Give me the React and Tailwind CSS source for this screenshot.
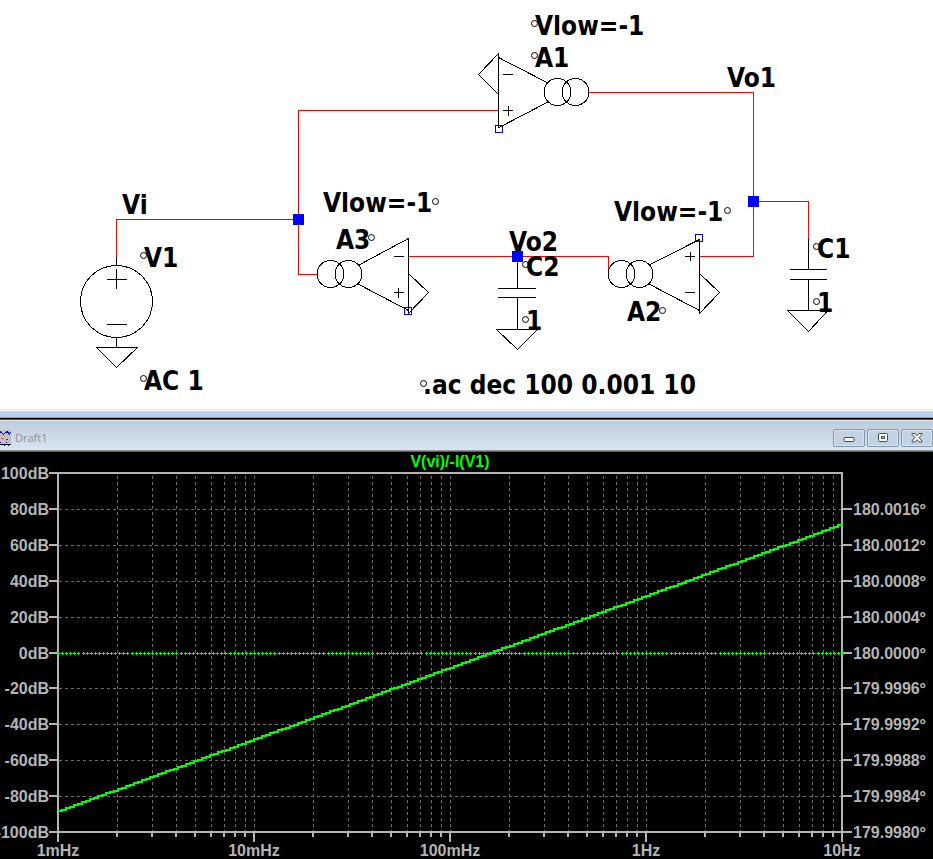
import React from "react";

const CAPTIONS = [
  [535, 35, "Vlow=-1"], [535, 67, "A1"], [727, 87, "Vo1"], [122, 214, "Vi"],
  [144, 267, "V1"], [144, 390, "AC 1"], [323, 212, "Vlow=-1"], [336, 249, "A3"],
  [509, 251, "Vo2"], [526, 276, "C2"], [526, 330, "1"], [614, 221, "Vlow=-1"],
  [627, 321, "A2"], [817, 258, "C1"], [817, 312, "1"], [423, 394, ".ac dec 100 0.001 10"],
];

const ANCHORS = [
  [534, 23], [534, 55], [143, 255], [143, 378], [435, 201], [371, 237], [525, 264],
  [525, 319], [727, 210], [662, 310], [816, 246], [816, 301], [423, 383],
];

const WIRES =
  "M116.5 257V219.5H298.5M498 110.5H298.5V274.5H318M588 92.5H753.5V256.5H700M753.5 201.5H808.5V240M409 256.5H608.5V275";

const PARTS =
  "M116.5 257V265M116.5 337V347.5M106.5 279.5H127M116.5 269V289M107 324.5H127M96.5 347.5H137.5L116.5 367.5Z" +
  "M498.5 53V128M498.5 53.5L478.5 74.5L498.5 94.5M498.5 57.5L548 83M548 102L499 127.5M503 74.5H513M503 110.5H513M508.5 106V116" +
  "M408.5 238V314M408.5 238.5L358 265.5M358 284L408.5 310.5M408.5 273.5L428.5 292.5L408.5 313.5M394 256.5H404M394 292.5H404M398.5 288V298" +
  "M699.5 239V314M699.5 239.5L650 264.5M649 284L699.5 310.5M699.5 273.5L719.5 292.5L699.5 313.5M685 256.5H695M690.5 252V261M685 292.5H695" +
  "M517.5 256V288M498 288.5H536M498 297.5H536M517.5 297V329M496.5 329.5H537.5L517.5 349.5Z" +
  "M808.5 239V269M790 269.5H827M790 279.5H827M808.5 279V310M787.5 310.5H828L808.5 331.5Z";

const COILS = [[557, 92], [575, 92], [330, 274], [348, 274], [621, 274], [639, 274]];

function Schematic() {
  return (
    <svg viewBox="0 0 933 409" className="block w-full bg-white" role="img" aria-label="Circuit schematic">
      <g fill="none" strokeWidth="1" shapeRendering="crispEdges">
        <path d={WIRES} stroke="#ff0000" />
        <path d={PARTS} stroke="#000" />
        <circle cx="116.5" cy="301.5" r="36" stroke="#000" />
        {COILS.map(([x, y]) => (
          <circle key={x} cx={x + 0.5} cy={y} r="13.5" stroke="#000" />
        ))}
        <path d="M495.5 125.5h7v7h-7zM404.5 307.5h7v7h-7zM695.5 234.5h7v7h-7z" stroke="#0000ff" />
      </g>
      <g style={{ fontFamily: '"DejaVu Sans Condensed", "DejaVu Sans", sans-serif' }} className="text-[26px] font-bold" fill="#000">
        {CAPTIONS.map(([x, y, text]) => (
          <text key={`${x}-${y}`} x={x} y={y}>{text}</text>
        ))}
      </g>
      <g fill="none" stroke="#000">
        {ANCHORS.map(([x, y]) => (
          <circle key={`${x}-${y}`} cx={x + 0.5} cy={y + 0.5} r="3" />
        ))}
      </g>
      <path d="M293 214h11v11h-11zM748 196h11v11h-11zM512 251h11v11h-11z" fill="#0000ff" />
    </svg>
  );
}

function WindowButton({ label, children }) {
  return (
    <button
      type="button"
      aria-label={label}
      className="flex h-[18px] w-8 items-center justify-center rounded-xs border border-[#8296ae] bg-[#c3d2e2] shadow-[inset_0_0_0_1px_#d8e3ee]"
    >
      <svg viewBox="0 0 12 10" className="h-[10px] w-3" aria-hidden="true">{children}</svg>
    </button>
  );
}

function TitleBar() {
  return (
    <header className="border-t border-[#e4e4e4] bg-white pt-px">
      <div className="h-[6px] bg-[#b9d1ea]" />
      <div className="h-px bg-[#38c0dc]" />
      <div className="h-px bg-black" />
      <div className="h-px bg-[#4e4650]" />
      <div className="flex h-[30px] items-center justify-between border-t border-[#e6e8ee] bg-linear-to-b from-[#bfcddb] to-[#d7e4f2]">
        <div className="flex items-center gap-1 pt-[5px]">
          <svg viewBox="0 0 11 16" className="h-4 w-[11px]" shapeRendering="crispEdges" aria-hidden="true">
            <path d="M0 0h11v14H0z" fill="#c0c0c0" />
            <path d="M0 1.5L3.5 4.5L7 1.5L9.5 4L11 2" fill="none" stroke="#0000e0" />
            <path d="M2 8h1v1H2zM6 9h2v1H6z" fill="#f00" />
            <path d="M0 12h1v1H0zM6 12h1v1H6z" fill="#00c" />
            <path d="M0 14h11v1H0zM4 15h1v1H4zM8 15h1v1H8z" fill="#000" />
          </svg>
          <h1 className="font-['Open_Sans',sans-serif] text-[11px] leading-4 text-[#8f9093]">Draft1</h1>
        </div>
        <div className="flex gap-[2px] pt-1">
          <WindowButton label="Minimize">
            <rect x="1" y="4.5" width="10" height="4" rx="1" fill="#fff" stroke="#444d5a" />
          </WindowButton>
          <WindowButton label="Restore">
            <rect x="1.5" y="0.5" width="9" height="8" rx="1" fill="#fff" stroke="#444d5a" />
            <rect x="4.5" y="3.5" width="3" height="2" fill="#b8c8da" stroke="#444d5a" />
          </WindowButton>
          <WindowButton label="Close">
            <path d="M1 .5H4L6 2.7L8 .5H11V1.5L8 4.5L11 8V9H8L6 6.7L4 9H1V8L4 4.5L1 1.5Z" fill="#fff" stroke="#444d5a" />
          </WindowButton>
        </div>
      </div>
      <div className="h-px bg-[#969696]" />
      <div className="h-px bg-[#5e5e5e]" />
    </header>
  );
}

const LEFT_LABELS = ["100dB", "80dB", "60dB", "40dB", "20dB", "0dB", "-20dB", "-40dB", "-60dB", "-80dB", "-100dB"];
const RIGHT_LABELS = [
  "180.0016º", "180.0012º", "180.0008º", "180.0004º", "180.0000º",
  "179.9996º", "179.9992º", "179.9988º", "179.9984º", "179.9980º",
];
const DECADES = ["1mHz", "10mHz", "100mHz", "1Hz", "10Hz"];

const rowY = (i) => 21 + Math.round(i * 35.9);
const decadeX = (i) => 58 + i * 196;
const minors = [0, 1, 2, 3].flatMap((d) =>
  [2, 3, 4, 5, 6, 7, 8, 9].map((n) => Math.round(decadeX(d) + Math.log10(n) * 196))
);

// Phase is constant: a row of small crosses, 48 to a decade.
const phaseTrace = Array.from({ length: 193 }, (_, k) => {
  const x = 58 + Math.round((k * 196) / 48);
  return `M${x - 1} 201h1v-1h1v1h1v1h-1v1h-1v-1h-1z`;
}).join("");

// Magnitude rises 40 dB per decade, sampled and snapped to whole pixels.
const gainTrace = Array.from({ length: 196 }, (_, k) => {
  const x = 58 + k * 4;
  const y = Math.round(359 - ((x - 58) * 287) / 784);
  return k ? `H${x}V${y}` : `M${x} ${y}`;
}).join("") + "H843";

function Plot() {
  return (
    <svg viewBox="0 0 933 407" className="block w-full bg-black" role="img" aria-label="Bode plot of V(vi)/-I(V1)">
      <g shapeRendering="crispEdges" fill="none">
        <g stroke="#6a6a6a" strokeDasharray="3 3">
          {[...minors, 254, 450, 646].map((x) => (
            <path key={x} d={`M${x + 0.5} 24V380`} />
          ))}
          {[1, 2, 3, 4, 5, 6, 7, 8, 9].map((i) => (
            <path key={i} d={`M59 ${rowY(i) + 0.5}H841`} />
          ))}
        </g>
        <g stroke="#b4b4b4" strokeWidth="2">
          <path d="M58 21H842V380H58Z" />
          {LEFT_LABELS.map((t, i) => (
            <path key={t} d={`M49 ${rowY(i)}H58${i ? `M842 ${rowY(i)}H852` : ""}`} />
          ))}
          {minors.map((x) => (
            <path key={x} d={`M${x} 380V385`} />
          ))}
          {DECADES.map((t, i) => (
            <path key={t} d={`M${decadeX(i)} 380V390`} />
          ))}
        </g>
        <path d={phaseTrace} fill="#00ff00" />
        <path d={gainTrace} stroke="#00ff00" strokeWidth="2" />
      </g>
      <g className="font-['Liberation_Sans',Arial,sans-serif] text-base font-bold" fill="#b4b4b4">
        {LEFT_LABELS.map((t, i) => (
          <text key={t} x="49" y={rowY(i) + 6} textAnchor="end">{t}</text>
        ))}
        {RIGHT_LABELS.map((t, i) => (
          <text key={t} x="853" y={rowY(i + 1) + 6}>{t}</text>
        ))}
        {DECADES.map((t, i) => (
          <text key={t} x={decadeX(i)} y="404" textAnchor="middle">{t}</text>
        ))}
        <text x="450" y="15" textAnchor="middle" fill="#00ff00">V(vi)/-I(V1)</text>
      </g>
    </svg>
  );
}

export default function App() {
  return (
    <main className="w-full overflow-hidden bg-black">
      <Schematic />
      <TitleBar />
      <Plot />
    </main>
  );
}
